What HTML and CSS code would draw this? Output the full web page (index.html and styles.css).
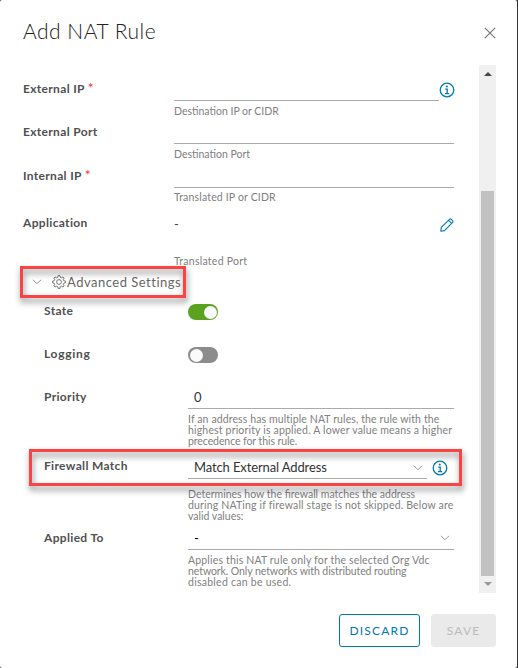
FILE: index.html
```html
<!DOCTYPE html>
<html lang="en">
<head>
<meta charset="utf-8">
<title>Add NAT Rule</title>
<link rel="stylesheet" href="styles.css">
</head>
<body>
<svg class="defs" width="0" height="0" aria-hidden="true">
  <symbol id="info" viewBox="0 0 16 16"><circle cx="8" cy="8" r="6.8" fill="none" stroke="currentColor" stroke-width="1.25"/><circle cx="7.8" cy="4.6" r="1" fill="currentColor"/><path d="M6.2 7.1h2v4.5M6 11.7h4.2" fill="none" stroke="currentColor" stroke-width="1.3"/></symbol>
  <symbol id="chevron" viewBox="0 0 10 6"><path d="M1 .8l4 4 4-4" fill="none" stroke="currentColor" stroke-width="1"/></symbol>
</svg>
<main class="dialog">
  <header class="header">
    <h1 class="title">Add NAT Rule</h1>
    <svg class="close" viewBox="0 0 12 12"><path d="M.8.8l10.4 10.4M11.2.8L.8 11.2" fill="none" stroke="currentColor" stroke-width="1.2"/></svg>
  </header>
  <div class="body">
    <form class="form">
      <div class="field">
        <label class="label">External IP <span class="req">*</span></label>
        <div class="control with-info"><div class="input"></div><svg class="info"><use href="#info"/></svg></div>
        <p class="hint"><span>Destination IP or CIDR</span></p>
      </div>
      <div class="field">
        <label class="label">External Port</label>
        <div class="control"><div class="input"></div></div>
        <p class="hint"><span>Destination Port</span></p>
      </div>
      <div class="field internal">
        <label class="label">Internal IP <span class="req">*</span></label>
        <div class="control"><div class="input"></div></div>
        <p class="hint"><span class="wide">Translated IP or CIDR</span></p>
      </div>
      <div class="field application">
        <label class="label">Application</label>
        <div class="control plain"><span class="dash">-</span>
          <svg class="pencil" viewBox="0 0 14 14"><path d="M1.3 9.4L9.5 1.3q.9-.8 1.8 0l1.3 1.3q.8.9 0 1.8L4.5 12.6l-3.7.6zM8.6 2.3l3.1 3.1" fill="none" stroke="currentColor" stroke-width="1.1" stroke-linejoin="round"/></svg>
        </div>
        <p class="hint"><span class="wider">Translated Port</span></p>
      </div>
      <div class="section">
        <svg class="chev"><use href="#chevron"/></svg>
        <svg class="gear" viewBox="0 0 14 14"><g fill="none" stroke="currentColor" stroke-width=".9" stroke-linejoin="round"><path d="M5.8 2.2L6.1.6h1.8l.3 1.6 1.4.6 1.4-.9 1.2 1.2-.9 1.4.6 1.4 1.6.3v1.6l-1.6.3-.6 1.4.9 1.4-1.2 1.2-1.4-.9-1.4.6-.3 1.6H6.1l-.3-1.6-1.4-.6-1.4.9-1.2-1.2.9-1.4-.6-1.4-1.6-.3V6.2l1.6-.3.6-1.4-.9-1.4L3 1.9l1.4.9z"/><circle cx="7" cy="7" r="2.4"/></g></svg>
        <span class="section-title">Advanced Settings</span>
      </div>
      <div class="advanced">
        <div class="field toggle-row"><label class="label">State</label><div class="control plain"><span class="toggle on"></span></div></div>
        <div class="field toggle-row"><label class="label logging">Logging</label><div class="control plain"><span class="toggle"></span></div></div>
        <div class="field priority">
          <label class="label">Priority</label>
          <div class="control"><div class="input value">0</div></div>
          <p class="hint"><span class="slight">If an address has multiple NAT rules, the rule with the</span><span class="wide">highest priority is applied. A lower value means a higher</span><span class="tight">precedence for this rule.</span></p>
        </div>
        <div class="field firewall">
          <label class="label">Firewall Match</label>
          <div class="control with-info"><div class="input value select"><span class="match">Match External Address</span><svg class="chev"><use href="#chevron"/></svg></div><svg class="info"><use href="#info"/></svg></div>
          <p class="hint"><span>Determines how the firewall matches the address</span><span class="wide">during NATing if firewall stage is not skipped. Below are</span><span>valid values:</span></p>
        </div>
        <div class="field applied">
          <label class="label">Applied To</label>
          <div class="control"><div class="input value select"><span class="black">-</span><svg class="chev"><use href="#chevron"/></svg></div></div>
          <p class="hint"><span class="wide">Applies this NAT rule only for the selected Org Vdc</span><span class="tight">network. Only networks with distributed routing</span><span class="wider">disabled can be used.</span></p>
        </div>
      </div>
    </form>
    <div class="scrollbar"><i class="up"></i><div class="thumb"></div><i class="down"></i></div>
  </div>
  <footer class="footer"><button class="btn discard">DISCARD</button><button class="btn save" disabled>SAVE</button></footer>
</main>
</body>
</html>
```
FILE: styles.css
```css
*, *::before, *::after { box-sizing: border-box; }
body { margin: 0; background: #333; font-family: Lato, "Liberation Sans", sans-serif; color: #454545; overflow: hidden; }
svg { display: block; flex: none; }
.defs { position: absolute; }
.dialog { width: 517px; height: 668px; background: #fff; border-radius: 2px; }
.header { height: 65px; padding: 18px 21px 0 23px; display: flex; justify-content: space-between; }
.title { margin: 0; font-size: 21px; line-height: 26px; font-weight: 300; letter-spacing: .5px; color: #222; white-space: nowrap; }
.close { width: 12px; height: 12px; margin-top: 9px; color: #777; }
.body { height: 528px; display: flex; justify-content: space-between; padding: 0 21px 0 23px; }
.form { width: 431px; padding-top: 9px; }
.field { display: grid; grid-template-columns: 151px 1fr; align-content: start; }
.label { font-size: 12px; line-height: 30px; height: 27px; font-weight: 700; letter-spacing: .33px; white-space: nowrap; color: #505050; }
.logging { letter-spacing: .7px; }
.req { color: #f33; font-weight: 400; font-size: 14px; line-height: 1; letter-spacing: 0; }
.control { height: 27px; display: flex; }
.input { flex: 1; border-bottom: 1px solid #aaa; }
.info { width: 16px; height: 16px; color: #0079ad; margin: 8px -1px 0 0; }
.hint { grid-column: 2; margin: 0; padding-top: 5px; font-size: 10.5px; line-height: 11px; color: #808080; font-weight: 400; }
.hint span { display: block; white-space: nowrap; width: max-content; }
.hint .slight { letter-spacing: .11px; }
.hint .wide { letter-spacing: .17px; }
.hint .wider { letter-spacing: .26px; }
.hint .tight { letter-spacing: -.08px; }
.internal { margin-top: 1px; }
.internal .hint { margin-top: -1px; }
.application { margin-top: 5px; height: 59px; }
.application .hint { padding-top: 21px; }
.plain { align-items: center; justify-content: space-between; padding-top: 4px; }
.dash { font-size: 13px; }
.pencil { width: 14px; height: 14px; color: #0079ad; margin-top: 2px; }
.section { height: 29px; display: flex; align-items: center; position: relative; padding-left: 9px; color: #666; }
.section::after, .firewall::after { content: ""; position: absolute; border: 3px solid #fa4444; filter: drop-shadow(1px 4px 3px rgba(0,0,0,.5)); }
.section::after { left: -3px; top: -1px; width: 166px; height: 32px; }
.section .chev { margin-right: 10px; }
.chev { width: 10px; height: 6px; color: #8c8c8c; }
.gear { width: 14px; height: 14px; margin-right: 1px; }
.section-title { font-size: 13px; letter-spacing: .5px; white-space: nowrap; }
.advanced { padding-left: 21px; }
.advanced .field { grid-template-columns: 144px 1fr; }
.toggle-row { height: 43px; }
.toggle { width: 30px; height: 16px; border-radius: 8px; background: #8c8c8c; padding: 1.5px; margin-top: 1px; }
.toggle::before { content: ""; display: block; width: 13px; height: 13px; border-radius: 50%; background: #fafafa; }
.on { background: #5aa220; }
.on::before { margin-left: auto; }
.value { font-size: 13px; line-height: 31px; padding-left: 6px; letter-spacing: .2px; color: #333; }
.match { letter-spacing: -.12px; }
.priority { height: 69px; }
.firewall { height: 72px; position: relative; }
.firewall .control { height: 28px; }
.firewall .input { line-height: 33px; }
.firewall .with-info { padding-right: 7px; }
.firewall .info { margin: 9px -1px 0 5px; }
.firewall .hint { padding-top: 10px; }
.firewall::after { left: -15px; top: -2px; width: 433px; height: 37px; }
.select { display: flex; justify-content: space-between; }
.select .chev { margin: 14px 4px 0 0; color: #999; }
.applied .chev { margin-top: 12px; }
.black { color: #000; }
.scrollbar { width: 17px; background: #f0f0f0; display: flex; flex-direction: column; align-items: center; padding: 7px 0; }
.up, .down { border: 4px solid transparent; border-top: 0; border-bottom: 4px solid #444; }
.down { border-bottom: 0; border-top: 4px solid #999; margin-top: 6px; }
.thumb { width: 13px; height: 385px; background: #c1c1c1; margin-top: 115px; }
.footer { display: flex; justify-content: flex-end; gap: 11px; padding: 21px 21px 0; }
.btn { font: 400 12px/31px Lato, sans-serif; letter-spacing: 1.2px; height: 33px; padding: 0; border-radius: 3px; border: 1px solid #0079ad; background: #fff; color: #0079ad; }
.discard { width: 81px; }
.save { width: 65px; border-color: #eaeaea; background: #eaeaea; color: #bbb; }
```
